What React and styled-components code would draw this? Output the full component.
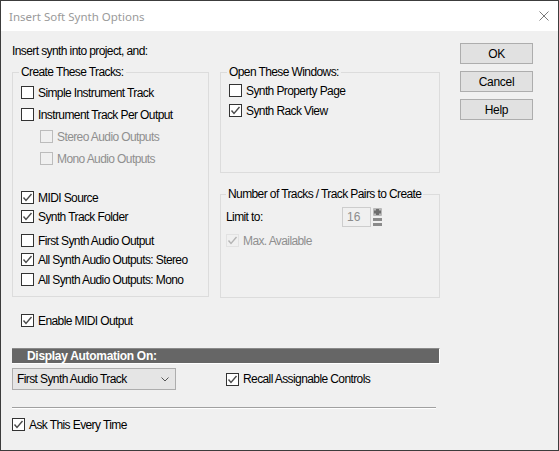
import React from 'react'
import styled, { createGlobalStyle } from 'styled-components'

const GlobalStyle = createGlobalStyle`
  html, body {
    margin: 0;
    padding: 0;
    background: #ffffff;
  }
  body {
    font-family: "Liberation Sans", Arial, sans-serif;
    font-size: 12px;
    letter-spacing: -0.6px;
    color: #000;
  }
`;

const Window = styled.div`
  width: 559px;
  height: 451px;
  box-sizing: border-box;
  border: 1px solid #3c3c3c;
  background: #f0f0f0;
  display: flex;
  flex-direction: column;
`;

const TitleBar = styled.div`
  height: 30px;
  flex: none;
  background: #fff;
  display: flex;
  align-items: center;
  justify-content: space-between;
  padding: 0 9px 0 8px;
`;

const Title = styled.span`
  font-family: "Noto Sans", "Open Sans", sans-serif;
  font-size: 11.5px;
  letter-spacing: 0;
  color: #9a9a9a;
`;

const Body = styled.div`
  flex: 1;
  display: flex;
  padding: 12px 0 0 11px;
`;

const Main = styled.div`
  width: 428px;
  display: flex;
  flex-direction: column;
`;

const Intro = styled.div`
  line-height: 16px;
  height: 16px;
`;

const GroupsRow = styled.div`
  display: flex;
  gap: 11px;
  margin-top: 5px;
`;

const RightCol = styled.div`
  display: flex;
  flex-direction: column;
  gap: 13px;
`;

const Group = styled.fieldset`
  margin: 0;
  padding: 0 0 0 ${p => p.$pad}px;
  width: ${p => p.$w}px;
  height: ${p => p.$h}px;
  box-sizing: border-box;
  border: 1px solid #dcdcdc;
  min-width: 0;
`;

const Legend = styled.legend`
  padding: 0 2px;
  margin-left: ${p => p.$ml || 0}px;
  line-height: 16px;
  white-space: nowrap;
`;

const Rows = styled.div`
  display: flex;
  flex-direction: column;
`;

const Row = styled.div`
  display: flex;
  align-items: center;
  gap: 4px;
  height: ${p => p.$h || 19}px;
  margin-top: ${p => p.$mt || 0}px;
  padding-left: ${p => p.$indent || 0}px;
  color: ${p => (p.$disabled ? '#8f8f8f' : '#000')};
  white-space: nowrap;
`;

const Box = styled.span`
  width: 13px;
  height: 13px;
  flex: none;
  box-sizing: border-box;
  border: 1px solid ${p => (p.$disabled ? (p.$faint ? '#e2e2e2' : '#bcbcbc') : '#333')};
  background: ${p => (p.$disabled ? '#f0f0f0' : '#fff')};
  display: flex;
  align-items: center;
  justify-content: center;
`;

const Check = ({ checked, disabled, faint }) => (
  <Box $disabled={disabled} $faint={faint}>
    {checked && (
      <svg width="11" height="11" viewBox="0 0 11 11">
        <polyline
          points="1.5,5.5 4,8.5 9.5,2"
          fill="none"
          stroke={disabled ? '#b4b4b4' : '#4a4a4a'}
          strokeWidth="1.4"
        />
      </svg>
    )}
  </Box>
);

const LimitLabel = styled.span`
  width: 116px;
`;

const SpinField = styled.div`
  width: 29px;
  height: 20px;
  box-sizing: border-box;
  border: 1px solid #cdcdcd;
  background: #f0f0f0;
  color: #8c8c8c;
  padding-left: 4px;
  line-height: 18px;
  letter-spacing: 0;
`;

const Spin = () => (
  <svg width="9" height="20" viewBox="0 0 9 20" style={{ marginLeft: 2 }}>
    <rect x="0" y="1" width="9" height="8" rx="1" fill="#b8b8b8" />
    <rect x="3" y="2" width="3" height="6" fill="#6e6e6e" />
    <rect x="1" y="3.5" width="7" height="3" fill="#6e6e6e" />
    <rect x="0" y="11" width="9" height="3" fill="#8a8a8a" />
    <rect x="0" y="16" width="9" height="3" fill="#8a8a8a" />
  </svg>
);

const SectionBar = styled.div`
  margin-top: 18px;
  height: 16px;
  box-sizing: border-box;
  background: #666;
  border-top: 1px solid #8a8a8a;
  border-right: 1px solid #fff;
  border-bottom: 1px solid #fff;
  color: #fff;
  font-weight: bold;
  font-size: 12px;
  letter-spacing: -0.3px;
  line-height: 14px;
  padding-left: 15px;
`;

const ComboRow = styled.div`
  display: flex;
  align-items: center;
  margin-top: 4px;
  height: 22px;
`;

const Combo = styled.div`
  width: 164px;
  height: 22px;
  box-sizing: border-box;
  border: 1px solid #adadad;
  background: #e5e5e5;
  display: flex;
  align-items: center;
  justify-content: space-between;
  padding: 0 6px 0 4px;
`;

const Separator = styled.div`
  width: 424px;
  margin-top: 17px;
  border-top: 1px solid #a0a0a0;
  border-bottom: 1px solid #fff;
`;

const Buttons = styled.div`
  margin-left: 20px;
  display: flex;
  flex-direction: column;
  gap: 7px;
`;

const Button = styled.button`
  width: 73px;
  height: 21px;
  box-sizing: border-box;
  border: 1px solid #adadad;
  background: #e1e1e1;
  font-family: inherit;
  font-size: 12px;
  letter-spacing: -0.3px;
  color: #000;
  padding: 0;
`;

export default function App() {
  return (
    <>
      <GlobalStyle />
      <Window>
        <TitleBar>
          <Title>Insert Soft Synth Options</Title>
          <svg width="10" height="10" viewBox="0 0 10 10">
            <path d="M0.5,0.5 L9.5,9.5 M9.5,0.5 L0.5,9.5" stroke="#7a7a7a" strokeWidth="1" />
          </svg>
        </TitleBar>
        <Body>
          <Main>
            <Intro>Insert synth into project, and:</Intro>
            <GroupsRow>
              <Group $w={197} $h={233} $pad={8}>
                <Legend $ml={-2}>Create These Tracks:</Legend>
                <Rows>
                  <Row $mt={3}><Check />Simple Instrument Track</Row>
                  <Row $mt={3}><Check />Instrument Track Per Output</Row>
                  <Row $mt={3} $indent={19} $disabled><Check disabled />Stereo Audio Outputs</Row>
                  <Row $mt={3} $indent={19} $disabled><Check disabled />Mono Audio Outputs</Row>
                  <Row $mt={20}><Check checked />MIDI Source</Row>
                  <Row><Check checked />Synth Track Folder</Row>
                  <Row $mt={5}><Check />First Synth Audio Output</Row>
                  <Row><Check checked />All Synth Audio Outputs: Stereo</Row>
                  <Row $mt={1}><Check />All Synth Audio Outputs: Mono</Row>
                </Rows>
              </Group>
              <RightCol>
                <Group $w={220} $h={109} $pad={8}>
                  <Legend $ml={-2}>Open These Windows:</Legend>
                  <Rows>
                    <Row $mt={1}><Check />Synth Property Page</Row>
                    <Row $mt={1}><Check checked />Synth Rack View</Row>
                  </Rows>
                </Group>
                <Group $w={220} $h={112} $pad={5}>
                  <Legend>Number of Tracks / Track Pairs to Create</Legend>
                  <Rows>
                    <Row $mt={5} $h={20} style={{ gap: 0 }}>
                      <LimitLabel>Limit to:</LimitLabel>
                      <SpinField>16</SpinField>
                      <Spin />
                    </Row>
                    <Row $mt={4} $disabled><Check checked disabled faint />Max. Available</Row>
                  </Rows>
                </Group>
              </RightCol>
            </GroupsRow>
            <Row $mt={13} $indent={9}><Check checked />Enable MIDI Output</Row>
            <SectionBar>Display Automation On:</SectionBar>
            <ComboRow>
              <Combo>
                <span>First Synth Audio Track</span>
                <svg width="8" height="5" viewBox="0 0 8 5">
                  <polyline points="0.5,0.5 4,4 7.5,0.5" fill="none" stroke="#555" strokeWidth="1" />
                </svg>
              </Combo>
              <Row $indent={50}><Check checked />Recall Assignable Controls</Row>
            </ComboRow>
            <Separator />
            <Row $mt={6}><Check checked />Ask This Every Time</Row>
          </Main>
          <Buttons>
            <Button>OK</Button>
            <Button>Cancel</Button>
            <Button>Help</Button>
          </Buttons>
        </Body>
      </Window>
    </>
  )
}
